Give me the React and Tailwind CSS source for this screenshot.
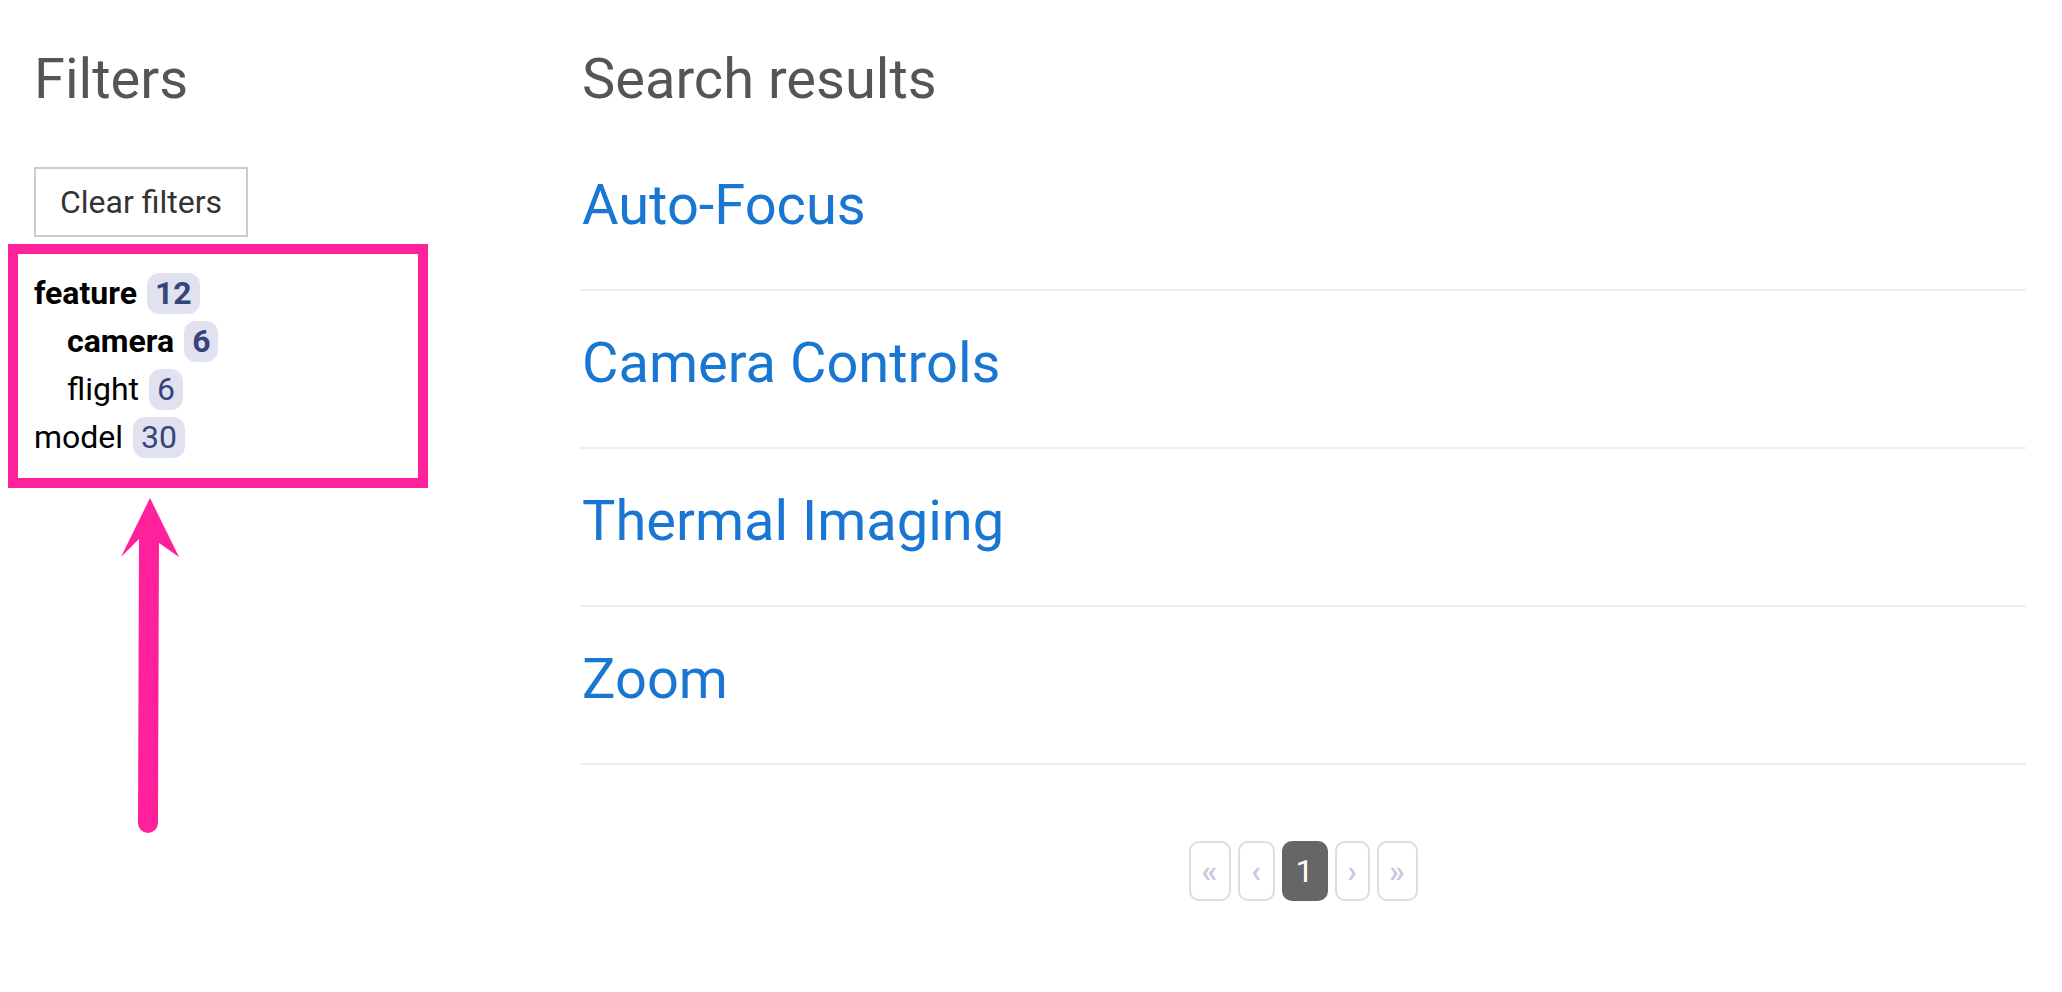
import React from "react";

const filters = [
  { label: "feature", count: 12, bold: true, indent: false },
  { label: "camera", count: 6, bold: true, indent: true },
  { label: "flight", count: 6, bold: false, indent: true },
  { label: "model", count: 30, bold: false, indent: false },
];

const results = ["Auto-Focus", "Camera Controls", "Thermal Imaging", "Zoom"];

export default function App() {
  return (
    <div
      className="relative min-h-[992px] w-full bg-white pt-[45px]"
      style={{ fontFamily: "Roboto, 'Liberation Sans', sans-serif" }}
    >
      <div className="flex pl-[34px] pr-[36px]">
        {/* Left column */}
        <div className="w-[546px] shrink-0">
          <h1 className="text-[56px] leading-[69px] font-normal text-[#555555]">Filters</h1>
          <button className="mt-[53px] flex h-[70px] items-center border-2 border-[#cccccc] bg-white px-[24px] text-[32px] leading-none text-[#333333]">
            Clear filters
          </button>
          <div className="relative mt-[32px] w-[360px]">
            <div className="pointer-events-none absolute left-[-26px] top-[-25px] h-[244px] w-[420px] border-[10px] border-[#ff219b]" />
            {filters.map((f) => (
              <div
                key={f.label}
                className={
                  "flex h-[48px] items-center gap-[10px] text-[32px] leading-[48px] text-black " +
                  (f.bold ? "font-bold " : "font-normal ") +
                  (f.indent ? "pl-[33px]" : "pl-0")
                }
              >
                <span>{f.label}</span>
                <span className="flex h-[41px] items-center rounded-[12px] bg-[#e0e2ef] px-[8px] leading-none text-[#37447a]">
                  {f.count}
                </span>
              </div>
            ))}
          </div>
        </div>

        {/* Right column */}
        <div className="flex-1">
          <h1 className="pl-[2px] text-[56px] leading-[69px] font-normal text-[#555555]">Search results</h1>
          <div className="mt-[19px]">
            {results.map((r) => (
              <div key={r} className="border-b-2 border-[#eeeeee] pt-[38px] pb-[49px] pl-[2px]">
                <a className="text-[56px] leading-[69px] text-[#1976d2]">{r}</a>
              </div>
            ))}
          </div>
          <div className="mt-[76px] flex justify-center gap-[7px] text-[32px]">
            <span className="flex h-[60px] w-[42px] items-center justify-center rounded-[10px] border-2 border-[#dadcea] font-bold text-[#c8cbdf]">«</span>
            <span className="flex h-[60px] w-[37px] items-center justify-center rounded-[10px] border-2 border-[#dadcea] font-bold text-[#c8cbdf]">‹</span>
            <span className="flex h-[60px] w-[46px] items-center justify-center rounded-[10px] border-2 border-[#666666] bg-[#666666] text-white">1</span>
            <span className="flex h-[60px] w-[35px] items-center justify-center rounded-[10px] border-2 border-[#dadcea] font-bold text-[#c8cbdf]">›</span>
            <span className="flex h-[60px] w-[41px] items-center justify-center rounded-[10px] border-2 border-[#dadcea] font-bold text-[#c8cbdf]">»</span>
          </div>
        </div>
      </div>

      {/* Annotation arrow */}
      <svg
        className="pointer-events-none absolute left-[110px] top-[490px]"
        width="80"
        height="350"
        viewBox="0 0 80 350"
      >
        <line x1="39" y1="50" x2="38" y2="333" stroke="#ff219b" strokeWidth="20" strokeLinecap="round" />
        <polygon points="40,8 69,67 49,53 29,49 11,67" fill="#ff219b" />
      </svg>
    </div>
  );
}
